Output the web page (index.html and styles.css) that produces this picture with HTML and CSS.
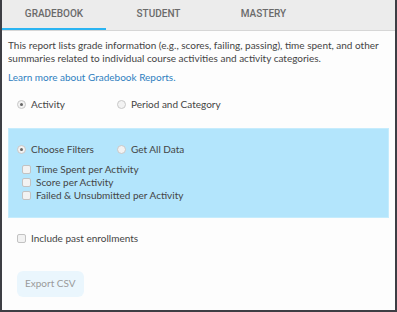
FILE: index.html
```html
<!DOCTYPE html>
<html>
<head>
    <title>Reports</title>
    <link rel="stylesheet" href="styles.css">
</head>
<body>
    <div class="frame">
        <ul class="tabs">
            <li class="on">GRADEBOOK</li>
            <li>STUDENT</li>
            <li>MASTERY</li>
        </ul>
        <div class="content">
            <p class="intro">This report lists grade information (e.g., scores, failing, passing), time spent, and other summaries related to individual course activities and activity categories.</p>
            <a href="javascript:;" class="learn">Learn more about Gradebook Reports.</a>
            <div class="row type">
                <label class="opt"><span class="radio checked"></span>Activity</label>
                <label class="opt"><span class="radio"></span>Period and Category</label>
            </div>
            <div class="filters">
                <div class="row">
                    <label class="opt"><span class="radio checked"></span>Choose Filters</label>
                    <label class="opt"><span class="radio"></span>Get All Data</label>
                </div>
                <ul class="checks">
                    <li><span class="box"></span>Time Spent per Activity</li>
                    <li><span class="box"></span>Score per Activity</li>
                    <li><span class="box"></span>Failed &amp; Unsubmitted per Activity</li>
                </ul>
            </div>
            <div class="past"><span class="box"></span>Include past enrollments</div>
            <a href="javascript:;" class="export">Export CSV</a>
        </div>
    </div>
</body>
</html>
```
FILE: styles.css
```css
*{
    margin: 0;
    padding: 0;
    box-sizing: border-box;
}
ul,ol{
    list-style: none;
}
body{
    width: 397px;
    height: 312px;
    overflow: hidden;
    background: #3d3e44;
    font-family: Lato, "Open Sans", sans-serif;
    font-size: 10px;
    line-height: 13px;
    color: #444;
}
.frame{
    margin: 0 2px;
    height: 310px;
    background: #fdfdfd;
}
.tabs{
    display: flex;
    height: 31px;
    background: #ececec;
    border-bottom: 1px solid #d6d6d6;
}
.tabs li{
    width: 105px;
    text-align: center;
    font-family: Roboto, sans-serif;
    font-size: 10px;
    font-weight: 500;
    color: #6a6a6a;
    padding-top: 7px;
}
.tabs li.on{
    border-bottom: 2px solid #2ab4f2;
    width: 104px;
}
.content{
    padding: 8px 6px 0 6px;
}
.learn{
    display: block;
    margin-top: 6px;
    color: #2f7fc0;
    text-decoration: none;
}
.row{
    display: flex;
    align-items: center;
    height: 13px;
}
.type{
    margin-top: 14px;
    padding-left: 9px;
}
.opt{
    display: flex;
    align-items: center;
    min-width: 100px;
}
.radio{
    width: 9px;
    height: 9px;
    border: 1px solid #c8c8c8;
    border-radius: 50%;
    background: #f2f2f2;
    margin-right: 5px;
    position: relative;
}
.radio.checked::after{
    content: "";
    position: absolute;
    left: 2px;
    top: 2px;
    width: 3px;
    height: 3px;
    border-radius: 50%;
    background: #666;
}
.filters{
    margin-top: 17px;
    background: #b3e5fc;
    border: 1px solid #c5ecfd;
    width: 381px;
    height: 90px;
    padding: 14px 0 0 8px;
}
.checks{
    margin-top: 7px;
    padding-left: 5px;
}
.checks li{
    display: flex;
    align-items: center;
    height: 13px;
}
.box{
    width: 9px;
    height: 9px;
    border: 1px solid #c2c2c2;
    border-radius: 2px;
    background: #f2f2f2;
    margin-right: 5px;
}
.past{
    display: flex;
    align-items: center;
    height: 13px;
    margin-top: 14px;
    padding-left: 9px;
}
.export{
    display: inline-block;
    margin: 26px 0 0 9px;
    padding: 6px 8px 7px;
    background: #eaf6fd;
    border-radius: 6px;
    color: #9a9a9a;
    text-decoration: none;
}
```
